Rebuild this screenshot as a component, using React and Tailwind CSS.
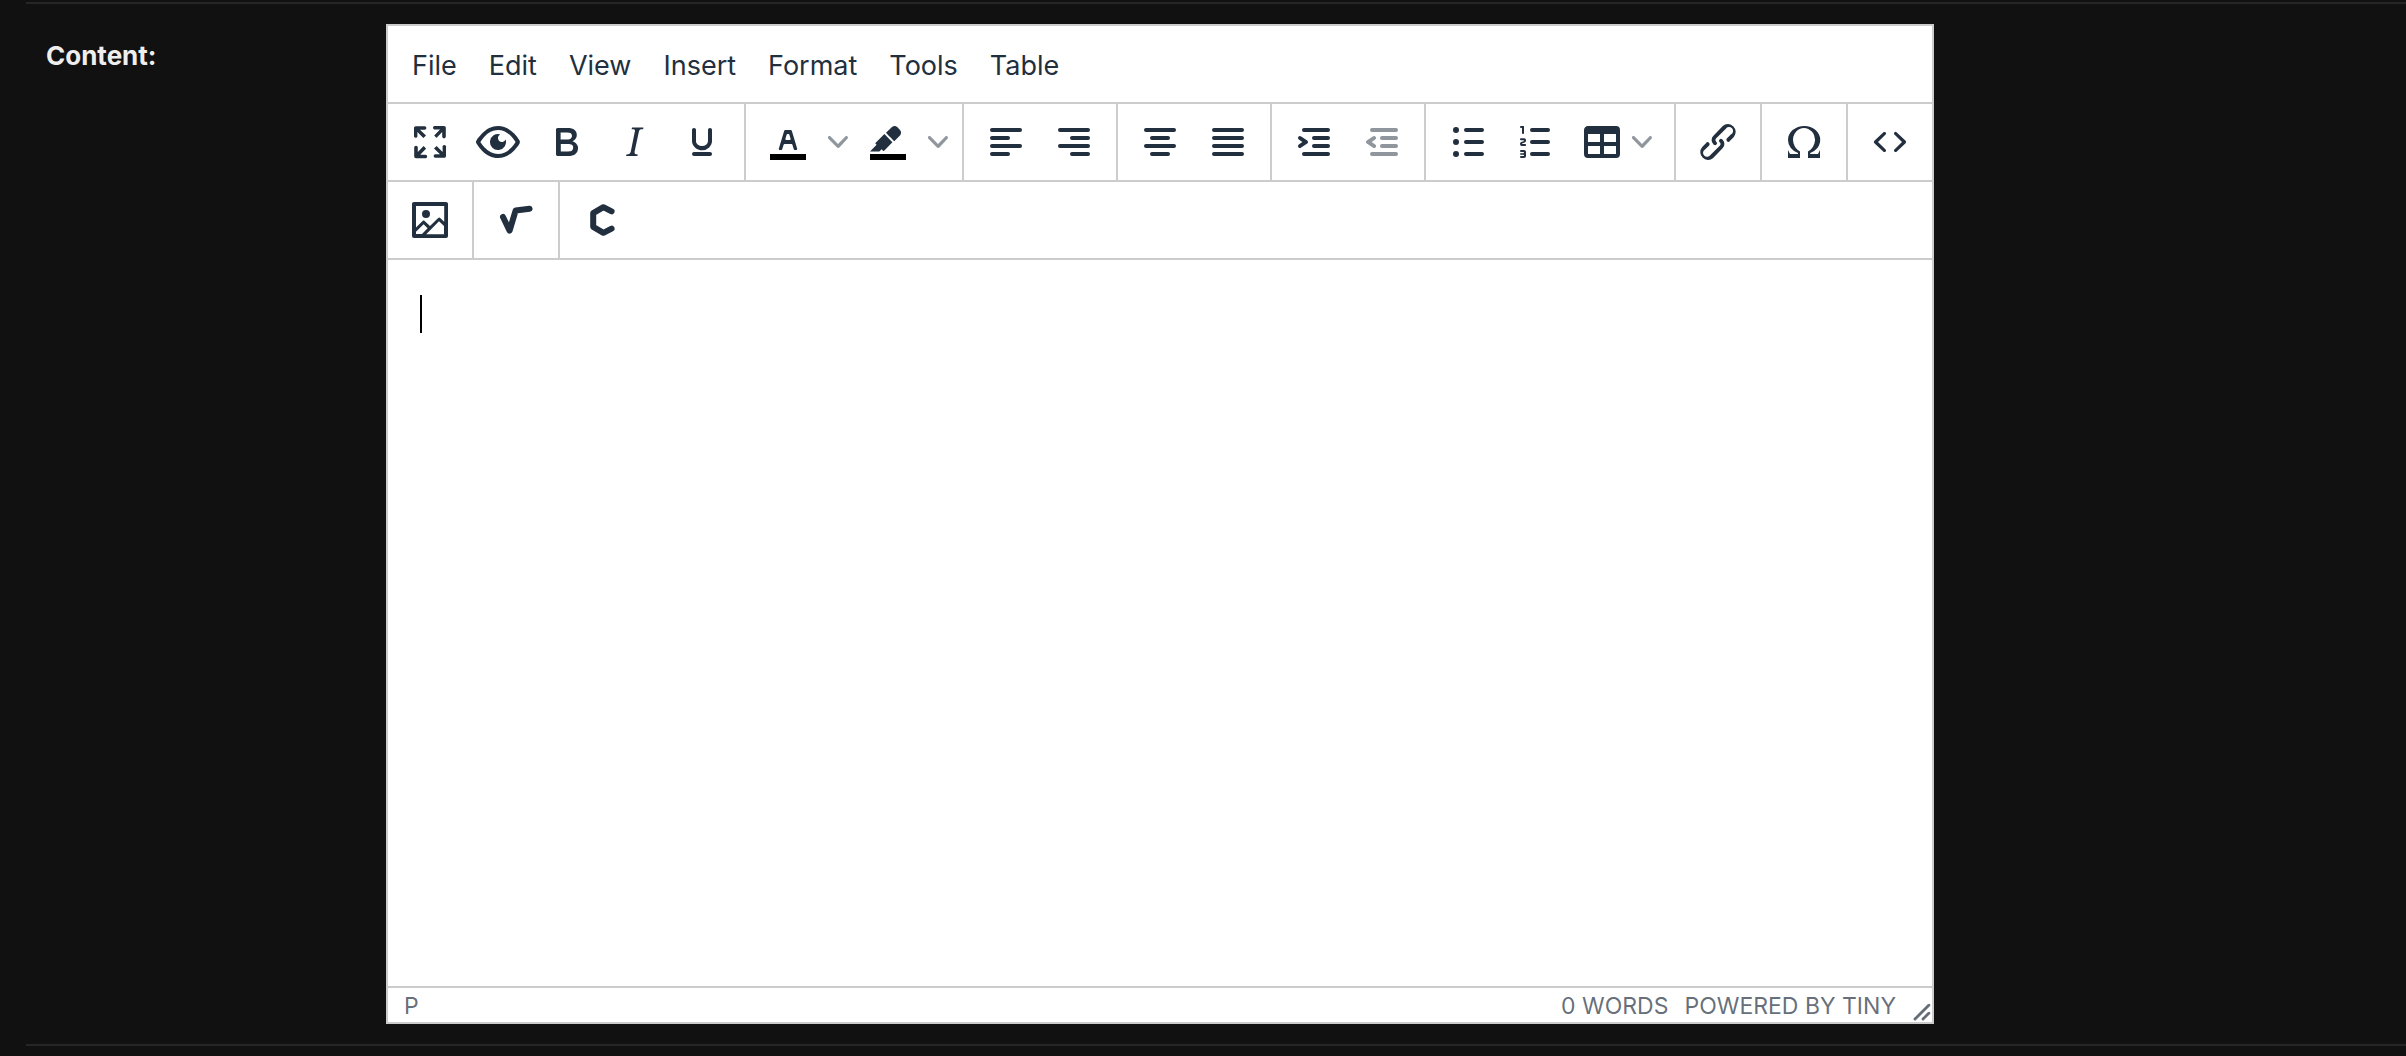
import clsx from "clsx";

const icons = {
  fullscreen:
    "M15.3 10l-1.2-1.3 2.9-3h-2.3a.9.9 0 1 1 0-1.7H19c.5 0 .9.4.9.9v4.4a.9.9 0 1 1-1.8 0V7l-2.9 3zm0 4l3 3v-2.3a.9.9 0 1 1 1.7 0V19c0 .5-.4.9-.9.9h-4.4a.9.9 0 1 1 0-1.8H17l-3-2.9 1.3-1.2zM10 15.4l-2.9 3h2.3a.9.9 0 1 1 0 1.7H5a.9.9 0 0 1-.9-.9v-4.4a.9.9 0 1 1 1.8 0V17l2.9-3 1.2 1.3zM8.7 10L5.7 7v2.3a.9.9 0 0 1-1.7 0V5c0-.5.4-.9.9-.9h4.4a.9.9 0 0 1 0 1.8H7l3 2.9-1.3 1.2z",
  preview:
    "M3.5 12.5c.5.8 1.1 1.6 1.8 2.3 2 2 4.2 3.2 6.7 3.2s4.7-1.2 6.7-3.2a16.2 16.2 0 0 0 2.1-2.8 15.7 15.7 0 0 0-2.1-2.8c-2-2-4.2-3.2-6.7-3.2a9.3 9.3 0 0 0-6.7 3.2A16.2 16.2 0 0 0 3.2 12c0 .2.2.3.3.5zm-2.4-1l.7-1.2L4 7.8C6.2 5.4 8.9 4 12 4c3 0 5.8 1.4 8.1 3.8a18.2 18.2 0 0 1 2.8 3.7v1l-.7 1.2-2.1 2.5c-2.3 2.4-5 3.8-8.1 3.8-3 0-5.8-1.4-8.1-3.8a18.2 18.2 0 0 1-2.8-3.7 1 1 0 0 1 0-1zm12-3.3a2 2 0 1 0 2.7 2.6 4 4 0 1 1-2.6-2.6z",
  bold: "M7.8 19c-.3 0-.5 0-.6-.2l-.2-.5V5.7c0-.2 0-.4.2-.5l.6-.2h5c1.5 0 2.7.3 3.5 1 .7.6 1.1 1.4 1.1 2.5a3 3 0 0 1-.6 1.9c-.4.6-1 1-1.6 1.2.4.1.9.3 1.3.6s.8.7 1 1.2c.4.4.5 1 .5 1.6 0 1.3-.4 2.3-1.3 3-.8.7-2.1 1-3.8 1H7.8zm5-8.3c.6 0 1.2-.1 1.6-.5.4-.3.6-.7.6-1.3 0-1.1-.8-1.7-2.3-1.7H9.3v3.5h3.4zm.5 6c.7 0 1.3-.1 1.7-.4.4-.4.6-.9.6-1.5s-.2-1-.7-1.4c-.4-.3-1-.4-2-.4H9.4v3.8h4z",
  italic:
    "M16.7 4.7l-.1.9h-.3c-.6 0-1 0-1.4.3-.3.3-.4.6-.5 1.1l-2.1 9.8v.6c0 .5.4.8 1.4.8h.2l-.2.8H8l.2-.8h.2c1.1 0 1.8-.5 2-1.5l2-9.8.1-.5c0-.6-.4-.8-1.4-.8h-.3l.2-.9h5.8z",
  underline:
    "M16 5c.6 0 1 .4 1 1v5.5a4 4 0 0 1-.4 1.8l-1 1.4a5.3 5.3 0 0 1-5.5 1 5 5 0 0 1-1.6-1c-.5-.4-.8-.9-1.1-1.4a4 4 0 0 1-.4-1.8V6c0-.6.4-1 1-1s1 .4 1 1v5.5c0 .3 0 .6.2 1l.6.7a3.3 3.3 0 0 0 2.2.8 3.4 3.4 0 0 0 2.2-.8c.3-.2.4-.5.6-.8l.2-.9V6c0-.6.4-1 1-1zM8 17h8c.6 0 1 .4 1 1s-.4 1-1 1H8a1 1 0 0 1 0-2z",
  textColor:
    "M8.7 16h-.8a.5.5 0 0 1-.5-.6l2.7-9c.1-.3.3-.4.5-.4h2.8c.2 0 .4.1.5.4l2.7 9a.5.5 0 0 1-.5.6h-.8a.5.5 0 0 1-.4-.4l-.7-2.2c0-.3-.3-.4-.5-.4h-3.4c-.2 0-.4.1-.5.4l-.7 2.2c0 .3-.2.4-.4.4zm2.6-7.6l-.6 2a.5.5 0 0 0 .5.6h1.6a.5.5 0 0 0 .5-.6l-.6-2c0-.3-.3-.4-.5-.4h-.4c-.2 0-.4.1-.5.4z",
  highlight:
    "M7.7 16.7H3l3.3-3.3-.7-.8L10.2 8l4 4.1-4 4.2c-.2.2-.6.2-.8 0l-.6-.7-1.1 1.1zm5-7.5L11 7.4l3-2.9a2 2 0 0 1 2.6 0L18 6c.7.7.7 2 0 2.7l-2.9 2.9-1.8-1.8-.5-.6",
  alignLeft:
    "M5 5h14a1 1 0 0 1 0 2H5a1 1 0 1 1 0-2zm0 4h8a1 1 0 0 1 0 2H5a1 1 0 1 1 0-2zm0 8h8a1 1 0 0 1 0 2H5a1 1 0 0 1 0-2zm0-4h14a1 1 0 0 1 0 2H5a1 1 0 0 1 0-2z",
  alignRight:
    "M5 5h14a1 1 0 0 1 0 2H5a1 1 0 1 1 0-2zm6 4h8a1 1 0 0 1 0 2h-8a1 1 0 0 1 0-2zm0 8h8a1 1 0 0 1 0 2h-8a1 1 0 0 1 0-2zm-6-4h14a1 1 0 0 1 0 2H5a1 1 0 0 1 0-2z",
  alignCenter:
    "M5 5h14a1 1 0 0 1 0 2H5a1 1 0 1 1 0-2zm3 4h8a1 1 0 0 1 0 2H8a1 1 0 1 1 0-2zm0 8h8a1 1 0 0 1 0 2H8a1 1 0 0 1 0-2zm-3-4h14a1 1 0 0 1 0 2H5a1 1 0 0 1 0-2z",
  alignJustify:
    "M5 5h14a1 1 0 0 1 0 2H5a1 1 0 1 1 0-2zm0 4h14a1 1 0 0 1 0 2H5a1 1 0 1 1 0-2zm0 4h14a1 1 0 0 1 0 2H5a1 1 0 0 1 0-2zm0 4h14a1 1 0 0 1 0 2H5a1 1 0 0 1 0-2z",
  indent:
    "M7 5h12a1 1 0 0 1 0 2H7a1 1 0 1 1 0-2zm5 4h7a1 1 0 0 1 0 2h-7a1 1 0 0 1 0-2zm0 4h7a1 1 0 0 1 0 2h-7a1 1 0 0 1 0-2zm-5 4h12a1 1 0 0 1 0 2H7a1 1 0 0 1 0-2zm-2.6-3.8L6.2 12l-1.8-1.2a1 1 0 0 1 1.2-1.6l3 2a1 1 0 0 1 0 1.6l-3 2a1 1 0 1 1-1.2-1.6z",
  outdent:
    "M7 5h12a1 1 0 0 1 0 2H7a1 1 0 1 1 0-2zm5 4h7a1 1 0 0 1 0 2h-7a1 1 0 0 1 0-2zm0 4h7a1 1 0 0 1 0 2h-7a1 1 0 0 1 0-2zm-5 4h12a1 1 0 0 1 0 2H7a1 1 0 0 1 0-2zm1.6-3.8a1 1 0 0 1-1.2 1.6l-3-2a1 1 0 0 1 0-1.6l3-2a1 1 0 0 1 1.2 1.6L6.8 12l1.8 1.2z",
  bulletList:
    "M11 5h8a1 1 0 0 1 0 2h-8a1 1 0 0 1 0-2zm0 6h8a1 1 0 0 1 0 2h-8a1 1 0 0 1 0-2zm0 6h8a1 1 0 0 1 0 2h-8a1 1 0 0 1 0-2zM6 4.5a1.5 1.5 0 1 1 0 3 1.5 1.5 0 0 1 0-3zm0 6a1.5 1.5 0 1 1 0 3 1.5 1.5 0 0 1 0-3zm0 6a1.5 1.5 0 1 1 0 3 1.5 1.5 0 0 1 0-3z",
  numberList:
    "M10 17h8a1 1 0 0 1 0 2h-8a1 1 0 0 1 0-2zm0-6h8a1 1 0 0 1 0 2h-8a1 1 0 0 1 0-2zm0-6h8a1 1 0 0 1 0 2h-8a1 1 0 1 1 0-2zM6 4v3.5c0 .3-.2.5-.5.5a.5.5 0 0 1-.5-.5V5h-.5a.5.5 0 0 1 0-1H6zm-1 8.8l.2.2h1.3c.3 0 .5.2.5.5s-.2.5-.5.5H4.9a1 1 0 0 1-.9-1V13c0-.4.3-.8.6-1l1.2-.4.2-.3a.2.2 0 0 0-.2-.2H4.5a.5.5 0 0 1-.5-.5c0-.3.2-.5.5-.5h1.6c.5 0 .9.4.9 1v.1c0 .4-.3.8-.6 1l-1.2.4-.2.3zM7 17v2c0 .6-.4 1-1 1H4.5a.5.5 0 0 1 0-1h1.2c.2 0 .3-.1.3-.3 0-.2-.1-.3-.3-.3H4.4a.4.4 0 1 1 0-.8h1.3c.2 0 .3-.1.3-.3 0-.2-.1-.3-.3-.3H4.5a.5.5 0 1 1 0-1H6c.6 0 1 .4 1 1z",
  table:
    "M19 4a2 2 0 0 1 2 2v12a2 2 0 0 1-2 2H5a2 2 0 0 1-2-2V6c0-1.1.9-2 2-2h14zM5 14v4h6v-4H5zm14 0h-6v4h6v-4zm0-6h-6v4h6V8zM5 12h6V8H5v4z",
  link: "M6.2 12.3a1 1 0 0 1 1.4 1.4l-2.1 2a2 2 0 1 0 2.7 2.8l4.8-4.8a1 1 0 0 0 0-1.4 1 1 0 1 1 1.4-1.3 2.9 2.9 0 0 1 0 4L9.6 20a3.9 3.9 0 0 1-5.5-5.5l2-2zm11.6-.6a1 1 0 0 1-1.4-1.4l2-2a2 2 0 1 0-2.6-2.8L11 10.3a1 1 0 0 0 0 1.4A1 1 0 1 1 9.6 13a2.9 2.9 0 0 1 0-4L14.4 4a3.9 3.9 0 0 1 5.5 5.5l-2 2z",
  omega:
    "M15 18h4l1-2v4h-6v-3.3l1.4-1a6 6 0 0 0 1.8-2.9 6.3 6.3 0 0 0-.1-4.1 5.8 5.8 0 0 0-3-3.2c-.6-.3-1.3-.5-2.1-.5a5.1 5.1 0 0 0-3.9 1.8 6.3 6.3 0 0 0-1.3 6 6.2 6.2 0 0 0 1.8 3l1.4.9V20H4v-4l1 2h4v-.5l-2-1L5.4 15A6.5 6.5 0 0 1 4 11c0-1 .2-1.9.6-2.7A7 7 0 0 1 6.3 6C7.1 5.4 8 5 9 4.5c1-.3 2-.5 3.1-.5a8.8 8.8 0 0 1 5.7 2 7 7 0 0 1 1.7 2.3 6 6 0 0 1 .2 4.8c-.2.7-.6 1.3-1 1.9a7.6 7.6 0 0 1-3.6 2.5v.5z",
  code: "M9.8 15.7c.3.3.3.8 0 1-.3.4-.9.4-1.2 0l-4.4-4.1a.8.8 0 0 1 0-1.2l4.4-4.2c.3-.3.9-.3 1.2 0 .3.3.3.8 0 1.1L6 12l3.8 3.7zM14.2 15.7c-.3.3-.3.8 0 1 .4.4.9.4 1.2 0l4.4-4.1c.3-.3.3-.9 0-1.2l-4.4-4.2a.8.8 0 0 0-1.2 0c-.3.3-.3.8 0 1.1L18 12l-3.8 3.7z",
  image:
    "M5 15.7l3.3-3.2c.3-.3.7-.3 1 0L12 15l4.1-4c.3-.4.8-.4 1 0l2 1.9V5H5v10.7zM5 18V19h3l2.8-2.9-2-2L5 17.9zm14-3l-2.5-2.4-6.4 6.5H19v-4zM4 3h16c.6 0 1 .4 1 1v16c0 .6-.4 1-1 1H4a1 1 0 0 1-1-1V4c0-.6.4-1 1-1zm6 8a2 2 0 1 0 0-4 2 2 0 0 0 0 4z",
};

// MathType / ChemType are drawn with thick strokes
const strokeIcons = {
  math: "M5.5 10.5l3.3 6.8 3-10 7-.9",
  chem: "M16.8 7.7l-4.1-2.1-5.1 3v6.8l5.1 3 4.1-2.1",
};

const menus = ["File", "Edit", "View", "Insert", "Format", "Tools", "Table"];

const toolbarRows = [
  [
    [
      { icon: "fullscreen", label: "Fullscreen" },
      { icon: "preview", label: "Preview" },
      { icon: "bold", label: "Bold" },
      { icon: "italic", label: "Italic" },
      { icon: "underline", label: "Underline" },
    ],
    [
      { icon: "textColor", label: "Text color", type: "split" },
      { icon: "highlight", label: "Background color", type: "split" },
    ],
    [
      { icon: "alignLeft", label: "Align left" },
      { icon: "alignRight", label: "Align right" },
    ],
    [
      { icon: "alignCenter", label: "Align center" },
      { icon: "alignJustify", label: "Justify" },
    ],
    [
      { icon: "indent", label: "Increase indent" },
      { icon: "outdent", label: "Decrease indent", disabled: true },
    ],
    [
      { icon: "bulletList", label: "Bullet list" },
      { icon: "numberList", label: "Numbered list" },
      { icon: "table", label: "Table", type: "menu" },
    ],
    [{ icon: "link", label: "Insert/edit link" }],
    [{ icon: "omega", label: "Special character" }],
    [{ icon: "code", label: "Source code" }],
  ],
  [
    [{ icon: "image", label: "Insert/edit image" }],
    [{ icon: "math", label: "Insert a math equation" }],
    [{ icon: "chem", label: "Insert a chemistry formula" }],
  ],
];

const Icon = ({ name, colorBar }) => (
  <svg viewBox="0 0 24 24" className="size-12 shrink-0" fill="currentColor" aria-hidden="true">
    {colorBar && <path d="M3 18h18v3H3z" fill="#000" />}
    {strokeIcons[name] ? (
      <path
        d={strokeIcons[name]}
        fill="none"
        stroke="currentColor"
        strokeWidth="3"
        strokeLinecap="round"
        strokeLinejoin="round"
      />
    ) : (
      <path d={icons[name]} fillRule={name === "table" ? "evenodd" : "nonzero"} />
    )}
  </svg>
);

const Chevron = () => (
  <svg viewBox="0 0 10 10" className="size-5 opacity-50" fill="currentColor" aria-hidden="true">
    <path d="M8.7 2.2c.3-.3.8-.3 1 0 .4.4.4.9 0 1.2L5.7 7.8c-.3.3-.9.3-1.2 0L.2 3.4a.8.8 0 0 1 0-1.2c.3-.3.8-.3 1.1 0L5 6l3.7-3.8z" />
  </svg>
);

const ToolButton = ({ item }) => {
  if (item.type === "menu") {
    return (
      <button type="button" aria-label={item.label} className="flex h-17 items-center px-2 hover:bg-gray-200">
        <Icon name={item.icon} />
        <span className="flex w-8 justify-center">
          <Chevron />
        </span>
      </button>
    );
  }
  return (
    <>
      <button
        type="button"
        aria-label={item.label}
        disabled={item.disabled}
        className={clsx(
          "flex h-17 w-17 items-center justify-center",
          item.disabled ? "opacity-50" : "hover:bg-gray-200"
        )}
      >
        <Icon name={item.icon} colorBar={item.type === "split"} />
      </button>
      {item.type === "split" && (
        <button
          type="button"
          aria-label={`${item.label} menu`}
          className="flex h-17 w-8 items-center justify-center hover:bg-gray-200"
        >
          <Chevron />
        </button>
      )}
    </>
  );
};

const Editor = () => (
  <div className="flex max-w-[1548px] flex-1 flex-col border-2 border-[#ccc] bg-white text-[#222f3e]">
    <div role="menubar" className="flex h-[78px] items-center border-b-2 border-[#ccc] px-2">
      {menus.map((menu) => (
        <button key={menu} type="button" role="menuitem" className="h-17 px-4 pt-1 text-[27px] hover:bg-gray-200">
          {menu}
        </button>
      ))}
    </div>
    {toolbarRows.map((groups, i) => (
      <div key={i} role="toolbar" className="flex h-[78px] border-b-2 border-[#ccc]">
        {groups.map((group, j) => (
          <div
            key={j}
            className={clsx("flex items-center px-2", j < groups.length - 1 && "border-r-2 border-[#ccc]")}
          >
            {group.map((item) => (
              <ToolButton key={item.icon} item={item} />
            ))}
          </div>
        ))}
      </div>
    ))}
    <div
      id="content"
      role="textbox"
      aria-multiline="true"
      aria-labelledby="content-label"
      className="h-[726px] px-8 py-[35px]"
    >
      <div className="h-[38px] w-[2px] bg-black" />
    </div>
    <div className="flex h-9 items-center border-t-2 border-[#ccc] pt-0.5 pl-4 text-[23px] leading-8 text-[#222f3e]/70">
      <button type="button">P</button>
      <div className="ml-auto flex h-full items-center gap-4">
        <button type="button">0 WORDS</button>
        <a href="#tiny">POWERED BY TINY</a>
        <svg viewBox="0 0 10 10" className="size-5 self-end" fill="currentColor" aria-hidden="true">
          <path d="M8.1 1.1A.5.5 0 1 1 9 2l-7 7A.5.5 0 1 1 1 8l7-7zM8.1 5.1A.5.5 0 1 1 9 6l-3 3A.5.5 0 1 1 5 8l3-3z" />
        </svg>
      </div>
    </div>
  </div>
);

export default function App() {
  return (
    <main className="min-h-screen bg-[#111] pl-[26px] pt-[2px] font-[Inter,'Liberation_Sans',sans-serif]">
      <div className="flex border-y-2 border-[#262626] py-5">
        <div id="content-label" className="w-[360px] pl-5 pt-4 text-[26px] leading-8 font-bold text-[#eee]">
          Content:
        </div>
        <Editor />
      </div>
    </main>
  );
}
